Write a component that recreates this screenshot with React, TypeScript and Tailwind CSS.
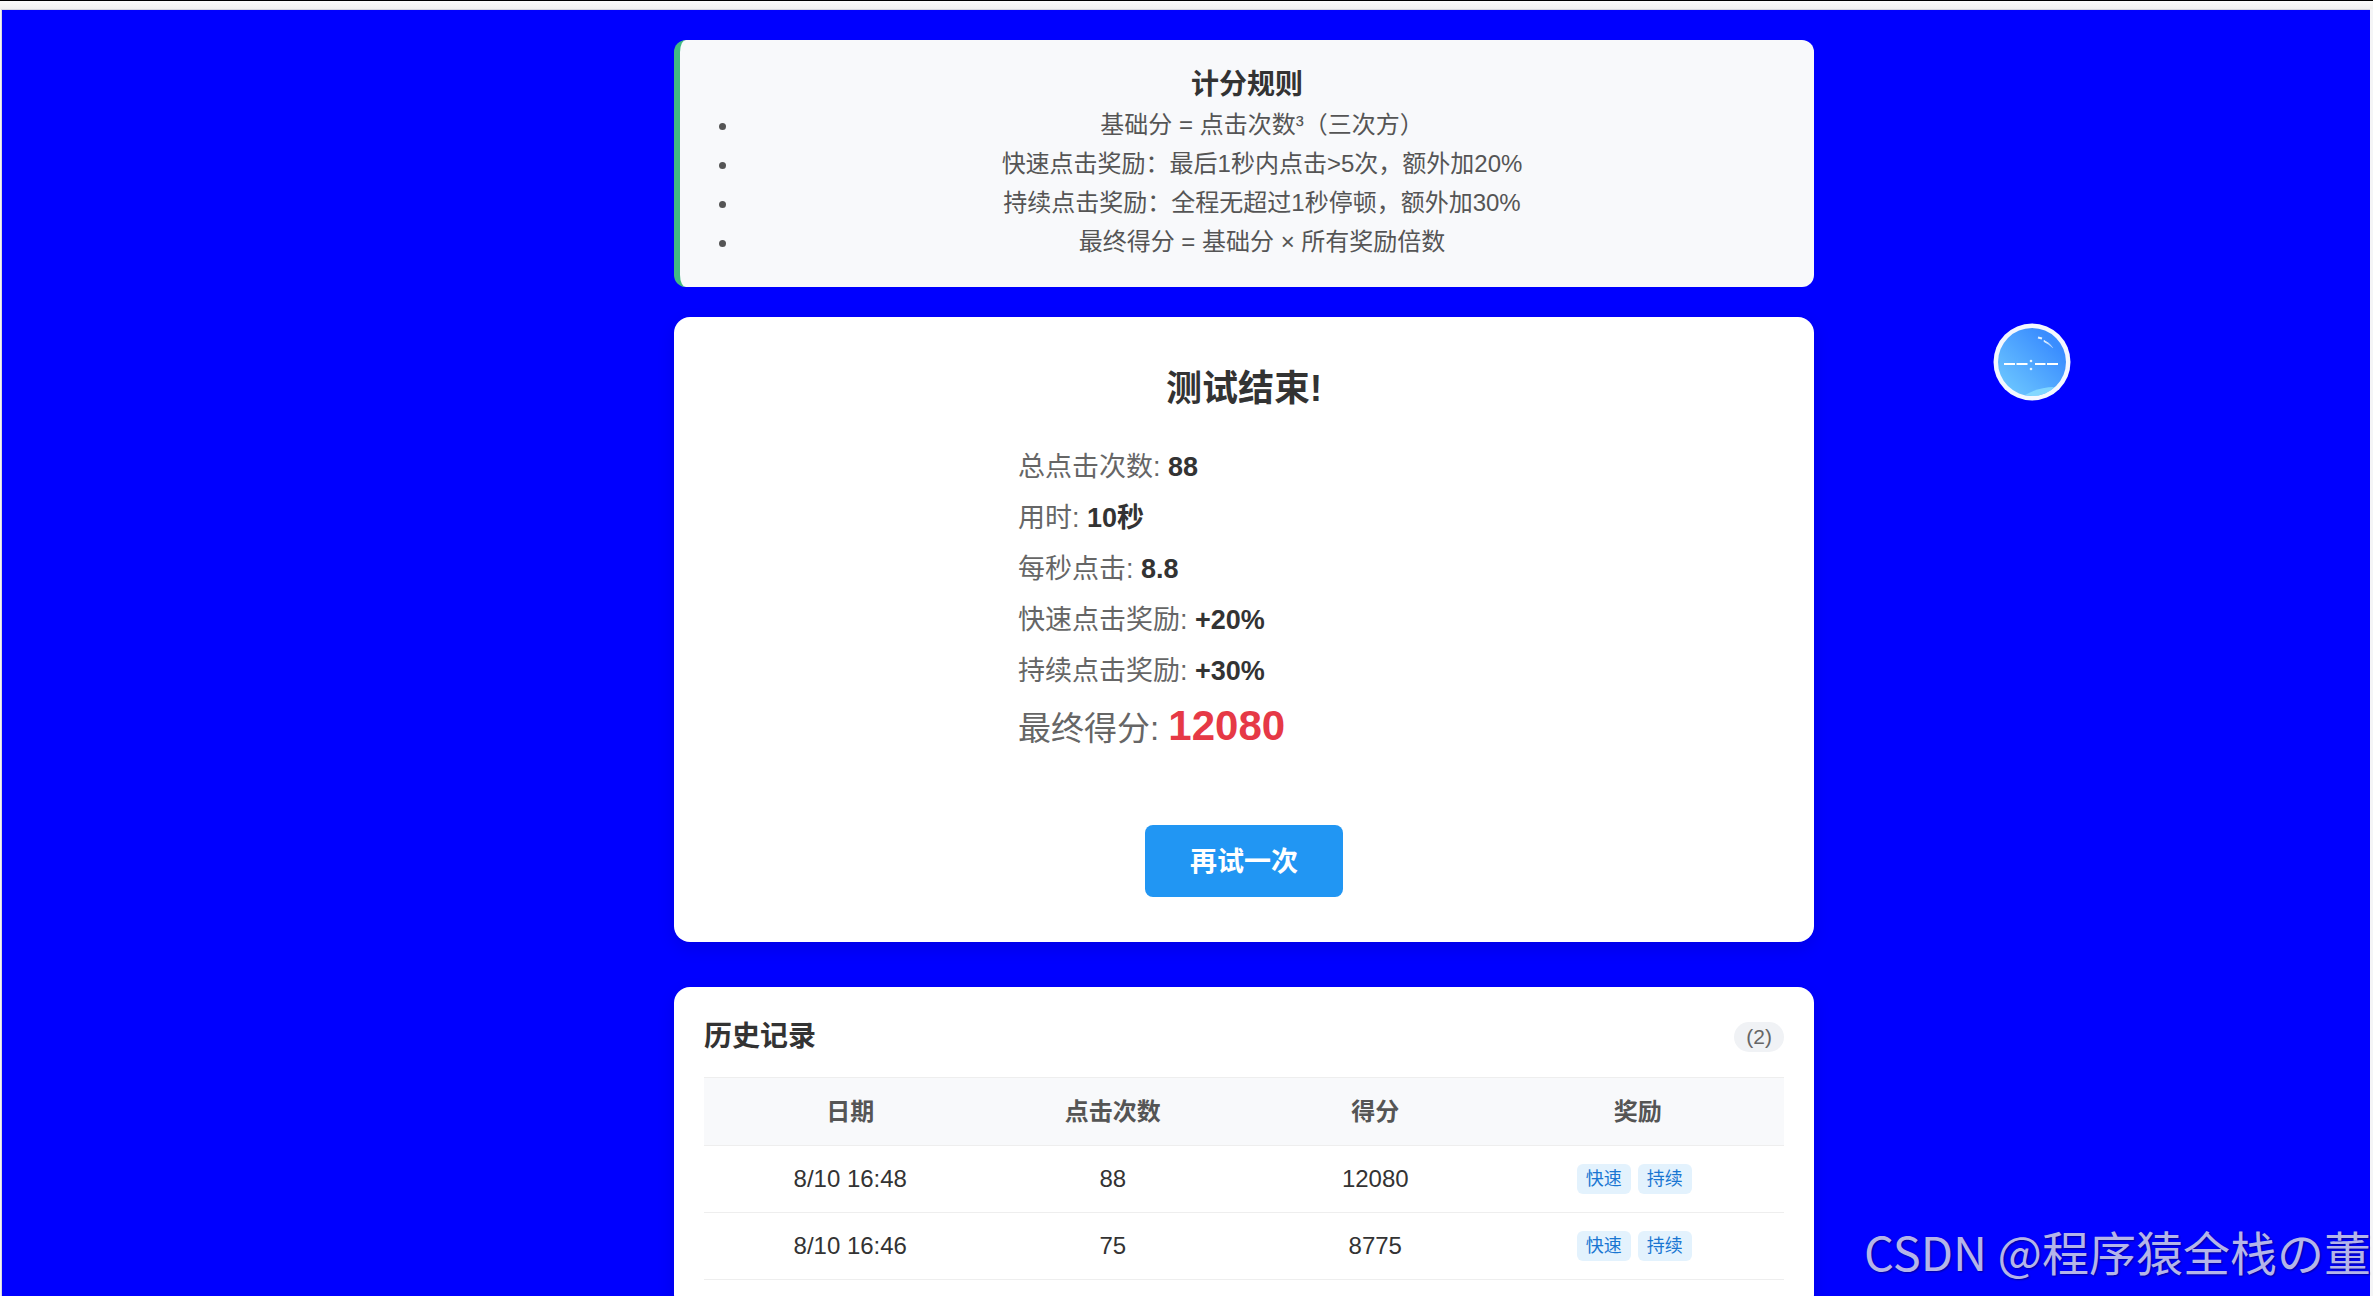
import { clsx } from "clsx";

interface HistoryRecord {
  date: string;
  clicks: number;
  score: number;
  bonuses: string[];
}

const RULES = [
  "基础分 = 点击次数³（三次方）",
  "快速点击奖励：最后1秒内点击>5次，额外加20%",
  "持续点击奖励：全程无超过1秒停顿，额外加30%",
  "最终得分 = 基础分 × 所有奖励倍数",
];

const STATS = [
  { label: "总点击次数", value: "88" },
  { label: "用时", value: "10秒" },
  { label: "每秒点击", value: "8.8" },
  { label: "快速点击奖励", value: "+20%" },
  { label: "持续点击奖励", value: "+30%" },
];

const COLUMNS = ["日期", "点击次数", "得分", "奖励"];

const HISTORY: HistoryRecord[] = [
  { date: "8/10 16:48", clicks: 88, score: 12080, bonuses: ["快速", "持续"] },
  { date: "8/10 16:46", clicks: 75, score: 8775, bonuses: ["快速", "持续"] },
];

function RulesCard() {
  return (
    <section className="rounded-xl border-l-6 border-[#42b983] bg-[#f8f9fb] px-[30px] pt-[25px] pb-[26px] text-center">
      <h3 className="text-[28px] leading-10 font-bold text-[#333]">计分规则</h3>
      <ul className="list-disc pl-[30px] text-2xl leading-[39px] text-[#555]">
        {RULES.map((rule) => (
          <li key={rule}>{rule}</li>
        ))}
      </ul>
    </section>
  );
}

function ResultCard() {
  return (
    <section className="mt-[30px] flex flex-col items-center rounded-2xl bg-white p-[45px] shadow-[0_6px_18px_rgba(0,0,0,0.1)]">
      <h2 className="text-4xl leading-[54px] font-bold text-[#333]">测试结束!</h2>
      <div className="mt-[26px] w-full max-w-[452px] text-[27px] text-[#666]">
        {STATS.map((stat) => (
          <p key={stat.label} className="leading-[51px]">
            {stat.label}: <strong className="font-bold text-[#333]">{stat.value}</strong>
          </p>
        ))}
        <p className="text-[33px] leading-[58px]">
          最终得分: <strong className="text-[42px] font-bold text-[#e63946]">12080</strong>
        </p>
      </div>
      <button
        type="button"
        className="mt-[67px] h-[72px] cursor-pointer rounded-lg bg-[#2196f3] px-[45px] pt-[2px] text-[27px] font-bold text-white"
      >
        再试一次
      </button>
    </section>
  );
}

function HistoryCard() {
  return (
    <section className="mt-[45px] rounded-2xl bg-white p-[30px] shadow-[0_6px_18px_rgba(0,0,0,0.1)]">
      <div className="flex items-center justify-between">
        <h3 className="text-[28px] leading-10 font-bold text-[#333]">历史记录</h3>
        <span className="rounded-full bg-[#f0f2f5] px-3 text-[21px] leading-[30px] text-[#666]">
          ({HISTORY.length})
        </span>
      </div>

      <table className="mt-5 block w-full text-center text-2xl text-[#333]">
        <thead className="block">
          <tr className="grid h-[69px] grid-cols-4 items-center border-y border-[#eee] bg-[#f8f9fb] px-[15px] text-[#555]">
            {COLUMNS.map((col) => (
              <th key={col} className="font-bold">{col}</th>
            ))}
          </tr>
        </thead>
        <tbody className="block">
          {HISTORY.map((row) => (
            <tr key={row.date} className="grid h-[67px] grid-cols-4 items-center border-b border-[#eee] px-[15px]">
              <td>{row.date}</td>
              <td>{row.clicks}</td>
              <td>{row.score}</td>
              <td className="flex justify-center">
                {row.bonuses.map((bonus) => (
                  <span
                    key={bonus}
                    className="mr-[7px] rounded-md bg-[#e3f2fd] px-[9px] text-lg leading-[30px] text-[#1976d2]"
                  >
                    {bonus}
                  </span>
                ))}
              </td>
            </tr>
          ))}
        </tbody>
      </table>
    </section>
  );
}

function FloatingTimer({ className }: { className?: string }) {
  return (
    <svg viewBox="0 0 78 78" className={clsx("size-[78px]", className)} aria-hidden="true">
      <defs>
        <linearGradient id="timer-fill" x1="0.1" y1="0.9" x2="0.8" y2="0.2">
          <stop offset="0" stopColor="#6cc6ff" />
          <stop offset="1" stopColor="#3a8dff" />
        </linearGradient>
        <linearGradient id="timer-glint" x1="0" y1="0" x2="1" y2="1">
          <stop offset="0" stopColor="#e4f2ff" />
          <stop offset="1" stopColor="#e4f2ff" stopOpacity="0.2" />
        </linearGradient>
        <clipPath id="timer-clip">
          <circle cx="39" cy="39" r="34" />
        </clipPath>
      </defs>
      <circle cx="39" cy="39" r="38.500" fill="#f4f8ff" />
      <circle cx="39" cy="39" r="34" fill="url(#timer-fill)" />
      <path
        d="M32 72Q46 64 61 64L56 71L46 74Z"
        fill="#8be0ff"
        opacity="0.8"
        clipPath="url(#timer-clip)"
      />
      <path d="M45 14.500L49 15.500" fill="none" stroke="#e4f2ff" strokeWidth="2" />
      <path d="M51 17.500Q57 20 60 25Q56 21 51 18.500Z" fill="url(#timer-glint)" stroke="url(#timer-glint)" />
      <path d="M11 41H22M23.500 41H34.500M42 41H52.500M54 41H65" stroke="#fff" strokeWidth="2" />
      <circle cx="38" cy="38" r="1.300" fill="#e6f5ff" />
      <circle cx="38" cy="46" r="1.300" fill="#e6f5ff" />
    </svg>
  );
}

export default function App() {
  return (
    <div className="relative flex h-screen flex-col overflow-hidden border-t border-black bg-[#f4f4f6] font-['Liberation_Sans','Noto_Sans_CJK_SC',sans-serif]">
      <div className="h-2 shrink-0 bg-linear-to-b from-[#fbfbfb] to-[#f1f1f1]" />
      <main className="mr-[3px] ml-px min-h-0 flex-1 overflow-hidden border-t border-l border-[#d8d8e0] bg-[#0000ff] pt-[30px] pl-[116px]">
        <div className="mx-auto max-w-[1140px]">
          <RulesCard />
          <ResultCard />
          <HistoryCard />
        </div>
      </main>

      <FloatingTimer className="absolute top-[322px] right-[302px]" />
      <p className="absolute right-[2px] bottom-[11px] font-['Noto_Sans_CJK_SC',sans-serif] text-[47px] leading-[68px] whitespace-nowrap text-[#b4b4ea] [text-shadow:1px_1px_2px_rgba(0,0,0,0.4)]">
        CSDN @程序猿全栈の董
      </p>
    </div>
  );
}
